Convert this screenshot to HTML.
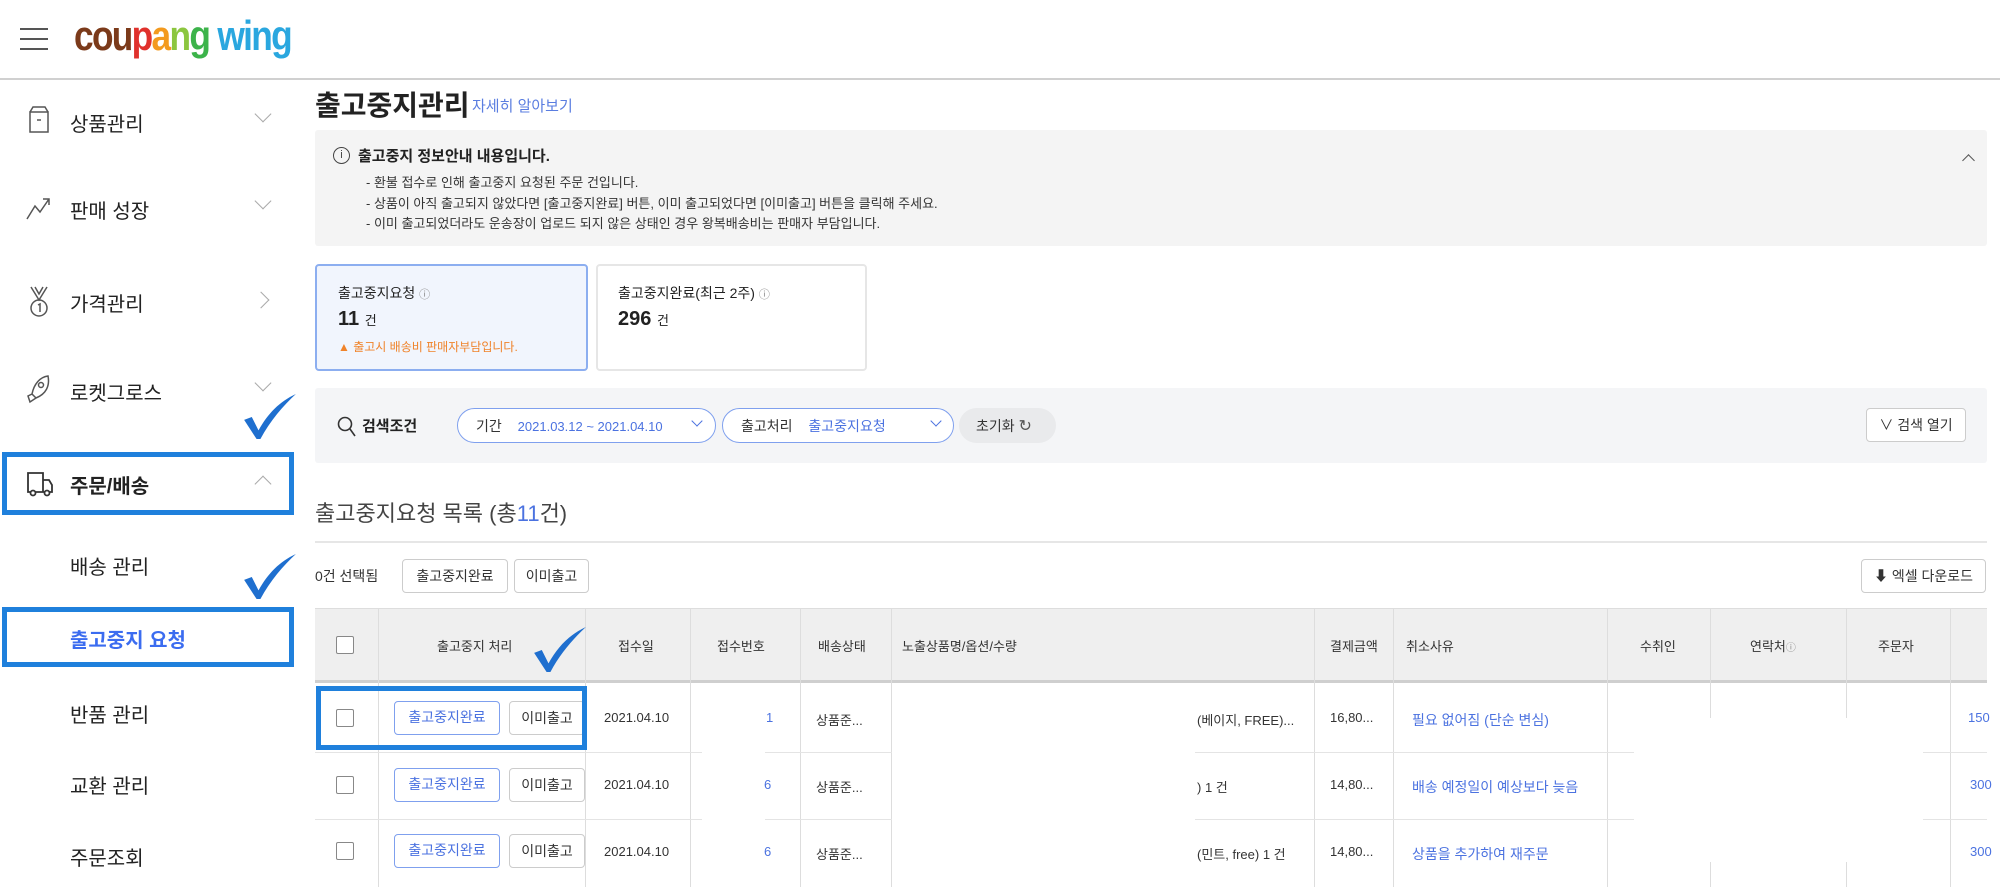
<!DOCTYPE html>
<html><head><meta charset="utf-8"><style>
*{margin:0;padding:0;box-sizing:border-box}
body{width:2000px;height:887px;overflow:hidden;background:#fff;font-family:"Liberation Sans","Noto Sans CJK KR",sans-serif;color:#222;position:relative}
.a{position:absolute;white-space:nowrap}
.side{font-size:20px;color:#222}
.chev{position:absolute;width:12px;height:12px;border-right:1.5px solid #aaa;border-bottom:1.5px solid #aaa}
.bluebox{position:absolute;border:5px solid #1f80dc}
.check{position:absolute}
.btn{position:absolute;border:1px solid #ccc;border-radius:4px;background:#fff;font-size:14px;text-align:center;color:#333}
.bbtn{position:absolute;border:1.5px solid #7fa0ee;border-radius:4px;background:#fff;font-size:14px;color:#4b72e0;text-align:center}
.cb{position:absolute;width:18px;height:18px;border:1.5px solid #888;border-radius:2px;background:#fff}
.th{position:absolute;top:636px;font-size:13px;color:#333}
.td{position:absolute;font-size:13px;color:#333}
.vl{position:absolute;width:1px;background:#ddd}
.blue{color:#4b72e0}
</style></head><body>
<svg width="0" height="0" style="position:absolute"><defs><symbol id="ck" viewBox="0 0 56 48"><path d="M1 27 L9 24 L16 38 C26 20 38 8 55 0 C42 12 28 28 18 47 L14 47 Z" fill="#1f6fcf"/></symbol></defs></svg>
<!-- header -->
<div class="a" style="left:20px;top:28px;width:28px;height:2px;background:#555"></div>
<div class="a" style="left:20px;top:38px;width:28px;height:2px;background:#555"></div>
<div class="a" style="left:20px;top:48px;width:28px;height:2px;background:#555"></div>
<div class="a" style="left:74px;top:12px;font-size:42px;font-weight:bold;letter-spacing:-2px;transform:scaleX(0.84);transform-origin:left top"><span style="color:#7b3a1a">cou</span><span style="color:#e0312c">p</span><span style="color:#f39a1e">a</span><span style="color:#8cc63f">n</span><span style="color:#3cb34a">g</span> <span style="color:#2aa7df">wing</span></div>
<div class="a" style="left:0;top:78px;width:2000px;height:2px;background:#d0d0d0"></div>

<!-- sidebar -->
<svg class="a" style="left:28px;top:106px" width="22" height="28" viewBox="0 0 22 28" fill="none" stroke="#555" stroke-width="1.5"><rect x="2" y="6" width="18" height="20"/><path d="M2 6 L5 1 H17 L20 6 M9 14 H13"/></svg>
<div class="a side" style="left:70px;top:108px">상품관리</div><div class="chev" style="left:257px;top:108px;transform:rotate(45deg)"></div>
<svg class="a" style="left:26px;top:196px" width="26" height="24" viewBox="0 0 26 24" fill="none" stroke="#555" stroke-width="1.5"><path d="M1 23 L9 10 L14 16 L23 3 M17 3 H23 V9"/></svg>
<div class="a side" style="left:70px;top:195px">판매 성장</div><div class="chev" style="left:257px;top:195px;transform:rotate(45deg)"></div>
<svg class="a" style="left:28px;top:286px" width="22" height="32" viewBox="0 0 22 32" fill="none" stroke="#555" stroke-width="1.5"><path d="M3 1 L11 14 L19 1 M7 1 L11 8 L15 1"/><circle cx="11" cy="22" r="8"/><path d="M10 19 L12 18 V26"/></svg>
<div class="a side" style="left:70px;top:288px">가격관리</div><div class="chev" style="left:255px;top:294px;transform:rotate(-45deg)"></div>
<svg class="a" style="left:26px;top:374px" width="26" height="30" viewBox="0 0 26 30" fill="none" stroke="#555" stroke-width="1.5"><path d="M22 2 C14 3 8 10 6 20 L10 24 C20 20 24 12 22 2Z M6 20 L2 22 L4 28 L10 24"/><circle cx="15" cy="11" r="2.5"/></svg>
<div class="a side" style="left:70px;top:377px">로켓그로스</div><div class="chev" style="left:257px;top:377px;transform:rotate(45deg)"></div>
<svg class="check" style="left:243px;top:394px" width="54" height="46"><use href="#ck"/></svg>

<div class="bluebox" style="left:2px;top:452px;width:292px;height:63px"></div>
<svg class="a" style="left:26px;top:470px" width="28" height="28" viewBox="0 0 28 28" fill="none" stroke="#333" stroke-width="1.8"><path d="M2 3 H17 V22 H2Z M17 10 H23 L26 15 V22 H17"/><circle cx="7" cy="23" r="2.5" fill="#fff"/><circle cx="21" cy="23" r="2.5" fill="#fff"/></svg>
<div class="a side" style="left:70px;top:470px;font-weight:bold">주문/배송</div><div class="chev" style="left:257px;top:478px;transform:rotate(-135deg)"></div>

<div class="a side" style="left:70px;top:551px">배송 관리</div>
<svg class="check" style="left:243px;top:554px" width="54" height="46"><use href="#ck"/></svg>
<div class="bluebox" style="left:2px;top:607px;width:292px;height:60px"></div>
<div class="a side" style="left:70px;top:624px;color:#3b6cf0;font-weight:bold">출고중지 요청</div>
<div class="a side" style="left:70px;top:699px">반품 관리</div>
<div class="a side" style="left:70px;top:770px">교환 관리</div>
<div class="a side" style="left:70px;top:842px">주문조회</div>

<!-- title -->
<div class="a" style="left:315px;top:84px;font-size:28px;font-weight:bold;color:#222">출고중지관리</div>
<div class="a" style="left:472px;top:95px;font-size:15px;color:#5a7de0">자세히 알아보기</div>

<!-- info -->
<div class="a" style="left:315px;top:130px;width:1672px;height:116px;background:#f4f4f4;border-radius:3px"></div>
<div class="a" style="left:333px;top:147px;width:17px;height:17px;border:1.5px solid #444;border-radius:50%;font-size:11px;text-align:center;line-height:14px;color:#444">i</div>
<div class="a" style="left:358px;top:145px;font-size:15px;font-weight:bold">출고중지 정보안내 내용입니다.</div>
<div class="a" style="left:366px;top:172px;font-size:13px;color:#333">- 환불 접수로 인해 출고중지 요청된 주문 건입니다.</div>
<div class="a" style="left:366px;top:193px;font-size:13px;color:#333">- 상품이 아직 출고되지 않았다면 [출고중지완료] 버튼, 이미 출고되었다면 [이미출고] 버튼을 클릭해 주세요.</div>
<div class="a" style="left:366px;top:213px;font-size:13px;color:#333">- 이미 출고되었더라도 운송장이 업로드 되지 않은 상태인 경우 왕복배송비는 판매자 부담입니다.</div>
<div class="chev" style="left:1964px;top:156px;transform:rotate(-135deg);border-color:#555;width:9px;height:9px"></div>

<!-- cards -->
<div class="a" style="left:315px;top:264px;width:273px;height:107px;background:#f1f5fd;border:2px solid #8caef0;border-radius:4px"></div>
<div class="a" style="left:338px;top:283px;font-size:14px">출고중지요청 <span style="font-size:11px;color:#888">ⓘ</span></div>
<div class="a" style="left:338px;top:308px;font-size:20px;font-weight:bold">11 <span style="font-size:13px;font-weight:normal">건</span></div>
<div class="a" style="left:338px;top:338px;font-size:12px;color:#f0832a">▲ 출고시 배송비 판매자부담입니다.</div>
<div class="a" style="left:596px;top:264px;width:271px;height:107px;background:#fff;border:2px solid #e6e6e6;border-radius:4px"></div>
<div class="a" style="left:618px;top:283px;font-size:14px">출고중지완료(최근 2주) <span style="font-size:11px;color:#888">ⓘ</span></div>
<div class="a" style="left:618px;top:308px;font-size:20px;font-weight:bold">296 <span style="font-size:13px;font-weight:normal">건</span></div>

<!-- search -->
<div class="a" style="left:315px;top:388px;width:1672px;height:75px;background:#f4f5f7;border-radius:3px"></div>
<svg class="a" style="left:337px;top:416px" width="20" height="22" viewBox="0 0 20 22" fill="none" stroke="#333" stroke-width="1.6"><circle cx="8" cy="8" r="6.5"/><path d="M13 13 L18 20"/></svg>
<div class="a" style="left:362px;top:415px;font-size:15px;font-weight:bold">검색조건</div>
<div class="a" style="left:457px;top:408px;width:259px;height:35px;border:1.5px solid #7fa0ee;border-radius:18px;background:#fff"></div>
<div class="a" style="left:476px;top:416px;font-size:14px;color:#333">기간 <span style="color:#4b72e0;font-size:13px;margin-left:12px">2021.03.12 ~ 2021.04.10</span></div>
<div class="chev" style="left:693px;top:417px;transform:rotate(45deg);border-color:#4b72e0;width:8px;height:8px"></div>
<div class="a" style="left:722px;top:408px;width:232px;height:35px;border:1.5px solid #7fa0ee;border-radius:18px;background:#fff"></div>
<div class="a" style="left:741px;top:416px;font-size:14px;color:#333">출고처리 <span style="color:#4b72e0;margin-left:12px">출고중지요청</span></div>
<div class="chev" style="left:932px;top:417px;transform:rotate(45deg);border-color:#4b72e0;width:8px;height:8px"></div>
<div class="a" style="left:959px;top:408px;width:97px;height:35px;background:#e9eaec;border-radius:18px"></div>
<div class="a" style="left:976px;top:416px;font-size:14px;color:#333">초기화 <span style="font-size:16px;color:#555">↻</span></div>
<div class="btn" style="left:1866px;top:408px;width:100px;height:34px;line-height:32px">∨ 검색 열기</div>

<!-- list -->
<div class="a" style="left:315px;top:496px;font-size:22px;color:#444">출고중지요청 목록 (총<span style="color:#4b72e0">11</span>건)</div>
<div class="a" style="left:315px;top:541px;width:1672px;height:2px;background:#e6e6e6"></div>
<div class="a" style="left:315px;top:566px;font-size:14px;color:#333">0건 선택됨</div>
<div class="btn" style="left:402px;top:559px;width:106px;height:34px;line-height:32px">출고중지완료</div>
<div class="btn" style="left:514px;top:559px;width:75px;height:34px;line-height:32px">이미출고</div>
<div class="btn" style="left:1861px;top:559px;width:125px;height:34px;line-height:32px">⬇ 엑셀 다운로드</div>

<!-- table -->
<div class="a" style="left:315px;top:608px;width:1672px;height:74px;background:#efefef;border-top:1px solid #ddd"></div>
<div class="a" style="left:315px;top:680px;width:1672px;height:3px;background:#cfcfcf"></div>
<div class="vl" style="left:378px;top:608px;height:279px"></div>
<div class="vl" style="left:585px;top:608px;height:279px"></div>
<div class="vl" style="left:690px;top:608px;height:279px"></div>
<div class="vl" style="left:800px;top:608px;height:279px"></div>
<div class="vl" style="left:891px;top:608px;height:279px"></div>
<div class="vl" style="left:1314px;top:608px;height:279px"></div>
<div class="vl" style="left:1393px;top:608px;height:279px"></div>
<div class="vl" style="left:1607px;top:608px;height:279px"></div>
<div class="vl" style="left:1710px;top:608px;height:110px"></div>
<div class="vl" style="left:1846px;top:608px;height:110px"></div>
<div class="vl" style="left:1950px;top:608px;height:279px"></div>
<div class="vl" style="left:1710px;top:862px;height:25px"></div>
<div class="vl" style="left:1846px;top:862px;height:25px"></div>
<div class="cb" style="left:336px;top:636px"></div>
<div class="th" style="left:437px">출고중지 처리</div>
<div class="th" style="left:618px">접수일</div>
<div class="th" style="left:717px">접수번호</div>
<div class="th" style="left:818px">배송상태</div>
<div class="th" style="left:902px">노출상품명/옵션/수량</div>
<div class="th" style="left:1330px">결제금액</div>
<div class="th" style="left:1406px">취소사유</div>
<div class="th" style="left:1640px">수취인</div>
<div class="th" style="left:1750px">연락처<span style="font-size:10px;color:#888">ⓘ</span></div>
<div class="th" style="left:1878px">주문자</div>

<!-- row lines -->
<div class="a" style="left:315px;top:752px;width:387px;height:1px;background:#e4e4e4"></div>
<div class="a" style="left:765px;top:752px;width:142px;height:1px;background:#e4e4e4"></div>
<div class="a" style="left:1195px;top:752px;width:439px;height:1px;background:#e4e4e4"></div>
<div class="a" style="left:1923px;top:752px;width:64px;height:1px;background:#e4e4e4"></div>
<div class="a" style="left:315px;top:819px;width:387px;height:1px;background:#e4e4e4"></div>
<div class="a" style="left:765px;top:819px;width:142px;height:1px;background:#e4e4e4"></div>
<div class="a" style="left:1195px;top:819px;width:439px;height:1px;background:#e4e4e4"></div>
<div class="a" style="left:1923px;top:819px;width:64px;height:1px;background:#e4e4e4"></div>
<!-- redaction blanks -->
<div class="a" style="left:702px;top:683px;width:63px;height:204px;background:#fff"></div>
<div class="a" style="left:892px;top:683px;width:300px;height:204px;background:#fff"></div>
<div class="a" style="left:1634px;top:718px;width:289px;height:144px;background:#fff"></div>

<!-- rows -->
<div class="cb" style="left:336px;top:709px"></div>
<div class="bbtn" style="left:394px;top:701px;width:106px;height:34px;line-height:31px">출고중지완료</div>
<div class="btn" style="left:509px;top:701px;width:76px;height:34px;line-height:32px">이미출고</div>
<div class="td" style="left:604px;top:710px">2021.04.10</div>
<div class="td blue" style="left:766px;top:710px">1</div>
<div class="td" style="left:816px;top:710px">상품준...</div>
<div class="td" style="left:1197px;top:710px">(베이지, FREE)...</div>
<div class="td" style="left:1330px;top:710px">16,80...</div>
<div class="td blue" style="left:1412px;top:710px;font-size:14px">필요 없어짐 (단순 변심)</div>
<div class="td blue" style="left:1968px;top:710px">150</div>

<div class="cb" style="left:336px;top:776px"></div>
<div class="bbtn" style="left:394px;top:768px;width:106px;height:34px;line-height:31px">출고중지완료</div>
<div class="btn" style="left:509px;top:768px;width:76px;height:34px;line-height:32px">이미출고</div>
<div class="td" style="left:604px;top:777px">2021.04.10</div>
<div class="td blue" style="left:764px;top:777px">6</div>
<div class="td" style="left:816px;top:777px">상품준...</div>
<div class="td" style="left:1197px;top:777px">) 1 건</div>
<div class="td" style="left:1330px;top:777px">14,80...</div>
<div class="td blue" style="left:1412px;top:777px;font-size:14px">배송 예정일이 예상보다 늦음</div>
<div class="td blue" style="left:1970px;top:777px">300</div>

<div class="cb" style="left:336px;top:842px"></div>
<div class="bbtn" style="left:394px;top:834px;width:106px;height:34px;line-height:31px">출고중지완료</div>
<div class="btn" style="left:509px;top:834px;width:76px;height:34px;line-height:32px">이미출고</div>
<div class="td" style="left:604px;top:844px">2021.04.10</div>
<div class="td blue" style="left:764px;top:844px">6</div>
<div class="td" style="left:816px;top:844px">상품준...</div>
<div class="td" style="left:1197px;top:844px">(민트, free) 1 건</div>
<div class="td" style="left:1330px;top:844px">14,80...</div>
<div class="td blue" style="left:1412px;top:844px;font-size:14px">상품을 추가하여 재주문</div>
<div class="td blue" style="left:1970px;top:844px">300</div>

<div class="bluebox" style="left:316px;top:686px;width:271px;height:64px"></div>
<svg class="check" style="left:533px;top:627px" width="54" height="46"><use href="#ck"/></svg>
</body></html>
